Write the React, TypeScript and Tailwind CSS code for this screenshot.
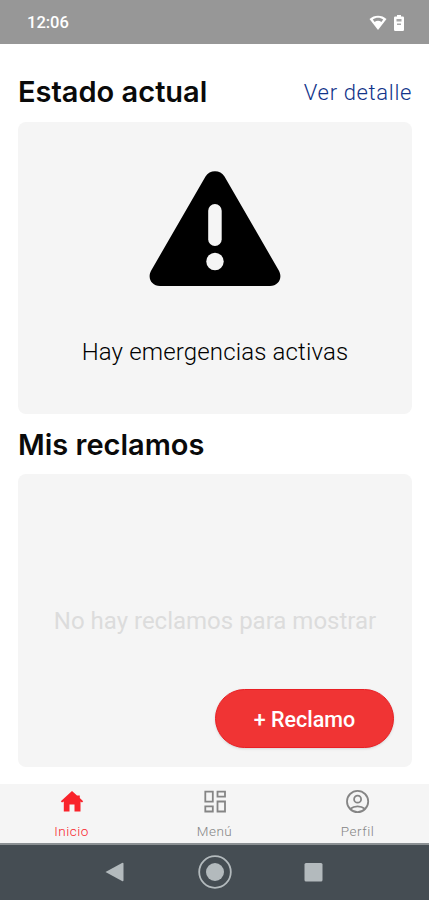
import type { ReactNode } from "react";

interface Tab {
  label: string;
  icon: ReactNode;
  active?: boolean;
}

function HomeIcon() {
  return (
    <svg width="24" height="24" viewBox="0 0 24 24">
      <path
        d="M12 1L0.800 11.200 2 12.500 3.800 11.500V21.500H9.500V14.500H14.500V21.500H20.500V11.500L22 12.500 23.200 11.200 19.800 8V5.500H17Z"
        fill="currentColor"
      />
    </svg>
  );
}

function DashboardIcon() {
  return (
    <svg width="24" height="24" viewBox="0 0 24 24" fill="none" stroke="currentColor" strokeWidth="1.800">
      <path d="M2.300 1.700h7.500v10H2.300zM14.500 1.700H22v5h-7.500zM2.300 16.400h7.500v5.100H2.300zM14.500 11.500H22v10h-7.500z" />
    </svg>
  );
}

function ProfileIcon() {
  return (
    <svg width="24" height="24" viewBox="0 0 24 24" fill="none" stroke="currentColor" strokeWidth="1.800">
      <circle cx="11.600" cy="11.500" r="10.600" />
      <circle cx="11.600" cy="9.200" r="3.500" />
      <path d="M4.400 18.800C8.400 15.500 14.800 15.500 18.800 18.800" />
    </svg>
  );
}

const tabs: Tab[] = [
  { label: "Inicio", icon: <HomeIcon />, active: true },
  { label: "Menú", icon: <DashboardIcon /> },
  { label: "Perfil", icon: <ProfileIcon /> },
];

function StatusBar() {
  return (
    <header className="flex h-11 shrink-0 items-center justify-between bg-[#979797] pt-0.5 pr-[25px] pl-[27px] text-white">
      <span className="text-[16.5px] font-medium">12:06</span>
      <div className="flex items-center gap-[7px]">
        <svg width="18" height="16" viewBox="0 0 18 16">
          <path d="M9 15 0.500 4.100C5 -0.500 13 -0.500 17.500 4.100Z" fill="currentColor" />
          <path d="M3.800 4.500C7 2.200 11 2.200 14.200 4.500L12.400 6.900C10.300 5.500 7.700 5.500 5.600 6.900Z" fill="#979797" />
        </svg>
        <svg width="10" height="16" viewBox="0 0 10 16">
          <path d="M3 0h4v1.500h1.800Q10 1.500 10 2.700v12Q10 16 8.800 16H1.200Q0 16 0 14.700v-12Q0 1.500 1.200 1.500H3z" fill="currentColor" />
          <path d="M2.500 4h5v2.500h-5zM3 8.500h4v1.500H3z" fill="#a8a8a8" />
        </svg>
      </div>
    </header>
  );
}

function WarningIcon() {
  return (
    <svg width="132" height="116" viewBox="0 0 132 116">
      <path
        d="M56.500 5.500C60.500-1.500 71.500-1.500 75.500 5.500L129.800 99.500C134 107 129.500 115 121 115H11C2.500 115-2 107 2.200 99.500Z"
        fill="#000"
      />
      <rect x="59.200" y="33" width="13.500" height="42" rx="6.750" fill="#f5f5f5" />
      <circle cx="66" cy="90.500" r="8.700" fill="#f5f5f5" />
    </svg>
  );
}

function TabBar() {
  return (
    <nav className="grid h-[59px] shrink-0 grid-cols-3 bg-[#f5f5f5]">
      {tabs.map((tab) => (
        <div
          key={tab.label}
          className={`flex flex-col items-center ${tab.active ? "text-[#f9232b]" : "text-[#858585]"}`}
        >
          <div className="flex h-[35px] items-center">{tab.icon}</div>
          <span className="mt-[3px] text-[13.5px] leading-[18px] font-light tracking-[0.5px]">{tab.label}</span>
        </div>
      ))}
    </nav>
  );
}

function SystemNav() {
  return (
    <footer className="flex h-[57px] shrink-0 items-center justify-center border-t-2 border-[#8b9093] bg-[#454d53] pb-0.5 text-[#b3babd]">
      <svg width="219" height="36" viewBox="0 0 219 36">
        <path d="M0.500 18 17 9Q18.500 8.300 18.500 9.800v16.400Q18.500 27.700 17 27Z" fill="currentColor" />
        <circle cx="110" cy="18" r="15.800" fill="none" stroke="currentColor" strokeWidth="1.800" />
        <circle cx="110" cy="18" r="9" fill="currentColor" />
        <rect x="199.500" y="9" width="18" height="18.500" rx="1.500" fill="currentColor" />
      </svg>
    </footer>
  );
}

export default function App() {
  return (
    <div className="flex h-[900px] w-full flex-col overflow-hidden bg-white font-['Roboto',sans-serif]">
      <StatusBar />
      <main className="flex flex-1 flex-col pr-[17px] pl-[18px]">
        <section>
          <div className="flex h-[78px] items-center justify-between pt-[18px]">
            <h1 className="font-['Inter',sans-serif] text-[29px] font-semibold text-[#0a0a0a]">Estado actual</h1>
            <a className="text-[22px] font-light tracking-[0.65px] text-[#12348a]">Ver detalle</a>
          </div>
          <div className="flex h-[292px] flex-col items-center rounded-lg bg-[#f5f5f5] pt-[49px]">
            <WarningIcon />
            <p className="mt-[47px] text-2xl leading-9 font-light tracking-[0.15px] text-black">Hay emergencias activas</p>
          </div>
        </section>
        <section>
          <h2 className="flex h-[60px] items-center pt-0.5 font-['Inter',sans-serif] text-[29px] font-semibold text-[#0a0a0a]">
            Mis reclamos
          </h2>
          <div className="flex h-[293px] flex-col rounded-lg bg-[#f5f5f5] pt-[129px] pr-[18px]">
            <p className="pl-[18px] text-center text-2xl leading-9 text-[#dcdcdc]">No hay reclamos para mostrar</p>
            <button className="mt-[50px] h-[59px] w-[179px] self-end rounded-full border border-[#e91f24] bg-[#f03434] pt-[3px] text-[21.500px] font-medium text-white shadow-sm">
              + Reclamo
            </button>
          </div>
        </section>
      </main>
      <TabBar />
      <SystemNav />
    </div>
  );
}
